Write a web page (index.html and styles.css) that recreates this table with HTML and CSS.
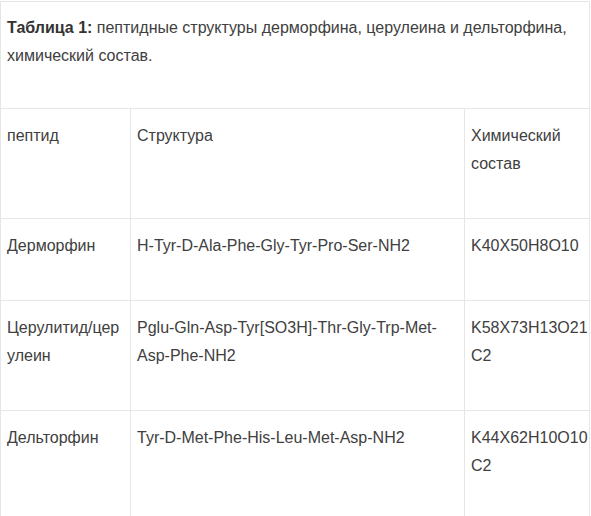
FILE: index.html
```html
<!DOCTYPE html>
<html lang="ru">
<head>
<meta charset="utf-8">
<link rel="stylesheet" href="styles.css">
</head>
<body>
<table class="peptides">
  <colgroup>
    <col class="c1">
    <col class="c2">
    <col class="c3">
  </colgroup>
  <tr>
    <td class="caption" colspan="3"><strong>Таблица 1:</strong> пептидные структуры дерморфина, церулеина и дельторфина, химический состав.</td>
  </tr>
  <tr>
    <td>пептид</td>
    <td>Структура</td>
    <td class="last">Химический состав</td>
  </tr>
  <tr>
    <td>Дерморфин</td>
    <td>H-Tyr-D-Ala-Phe-Gly-Tyr-Pro-Ser-NH2</td>
    <td class="last">K40X50H8O10</td>
  </tr>
  <tr>
    <td>Церулитид/&#8288;церулеин</td>
    <td>Pglu-Gln-Asp-Tyr[SO3H]-Thr-Gly-Trp-Met-Asp-Phe-NH2</td>
    <td class="last">K58X73H13O21C2</td>
  </tr>
  <tr>
    <td>Дельторфин</td>
    <td>Tyr-D-Met-Phe-His-Leu-Met-Asp-NH2</td>
    <td class="last">K44X62H10O10C2</td>
  </tr>
</table>
</body>
</html>
```

FILE: styles.css
```css
html, body {
  margin: 0;
  padding: 0;
  background: #ffffff;
}

body {
  padding-top: 1px;
  font-family: "Liberation Sans", Arial, sans-serif;
  font-size: 16px;
  color: #404040;
}

.peptides {
  width: 589px;
  table-layout: fixed;
  border-collapse: collapse;
  border: 1px solid #e6e6e6;
}

.c1 { width: 130px; }
.c2 { width: 334px; }
.c3 { width: 125px; }

.peptides td {
  border: 1px solid #e6e6e6;
  vertical-align: top;
  line-height: 28px;
  padding: 13px 6px 40px 6px;
  overflow-wrap: break-word;
}

.peptides td.last {
  padding-right: 0;
}

.peptides td.caption {
  padding: 12px 6px 38px 6px;
}

.caption strong {
  font-weight: bold;
  color: #333333;
}
```
